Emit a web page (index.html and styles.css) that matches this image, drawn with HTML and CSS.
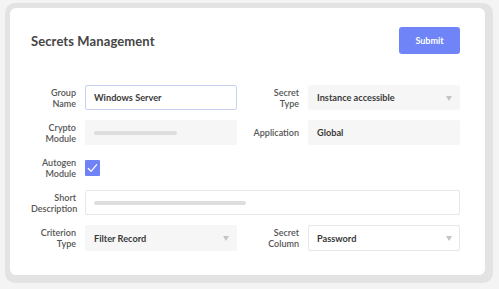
FILE: index.html
```html
<!DOCTYPE html>
<html>
<head>
<meta charset="utf-8">
<link rel="stylesheet" href="styles.css">
</head>
<body>
<div class="frame">
  <div class="card">
    <div class="header">
      <h1 class="title">Secrets Management</h1>
      <button class="submit">Submit</button>
    </div>
    <div class="form">
      <div class="label">Group<br>Name</div>
      <div class="field field-active">Windows Server</div>
      <div class="label">Secret<br>Type</div>
      <div class="field field-filled">Instance accessible<span class="arrow"></span></div>

      <div class="label">Crypto<br>Module</div>
      <div class="field field-filled"><span class="bar bar-short"></span></div>
      <div class="label">Application</div>
      <div class="field field-filled">Global</div>

      <div class="label">Autogen<br>Module</div>
      <div class="check-cell">
        <span class="checkbox">
          <svg viewBox="0 0 16 16" width="15" height="16"><path d="M3.5 8.5 L6.5 11.5 L12.5 4.5" fill="none" stroke="#fff" stroke-width="1.3" stroke-linecap="round" stroke-linejoin="round"/></svg>
        </span>
      </div>
      <div></div>
      <div></div>

      <div class="label">Short<br>Description</div>
      <div class="field field-outline span3"><span class="bar bar-long"></span></div>

      <div class="label">Criterion<br>Type</div>
      <div class="field field-filled tall">Filter Record<span class="arrow"></span></div>
      <div class="label">Secret<br>Column</div>
      <div class="field field-outline tall">Password<span class="arrow"></span></div>
    </div>
  </div>
</div>
</body>
</html>
```
FILE: styles.css
```css
* { box-sizing: border-box; }
html, body { margin: 0; padding: 0; }
body {
  background: #f4f4f4;
  font-family: Lato, "Open Sans", sans-serif;
  width: 499px;
  height: 289px;
  overflow: hidden;
}
.frame {
  margin: 3px 6px 6px 5px;
  padding: 5px 8px 8px 5px;
  background: #e3e3e3;
  border-radius: 10px;
  height: 280px;
}
.card {
  background: #fff;
  border-radius: 6px;
  padding: 19px 25px 23px 21px;
  height: 267px;
}
.header {
  display: flex;
  justify-content: space-between;
  align-items: center;
  height: 27px;
}
.title {
  margin: 0;
  font-size: 13px;
  font-weight: 700;
  color: #454545;
  letter-spacing: 0.1px;
}
.submit {
  width: 61px;
  height: 27px;
  border: none;
  border-radius: 3px;
  background: #6e84f7;
  color: #fff;
  font-family: inherit;
  font-size: 9px;
  font-weight: 700;
  padding: 0;
}
.form {
  margin-top: 31px;
  display: grid;
  grid-template-columns: 45px 152px 53px 152px;
  grid-template-rows: 25px 25px 25px 25px 26px;
  column-gap: 9px;
  row-gap: 10px;
}
.label {
  text-align: right;
  font-size: 9px;
  line-height: 11px;
  color: #555;
  font-weight: 600;
  align-self: center;
  white-space: nowrap;
}
.field {
  position: relative;
  display: flex;
  align-items: center;
  height: 25px;
  padding: 0 8px;
  font-size: 9.2px;
  font-weight: 700;
  color: #3a3a3a;
  border: 1px solid transparent;
  border-radius: 2px;
}
.tall { height: 26px; }
.field-active {
  border-color: #c9d2f3;
  background: #fff;
}
.field-filled {
  background: #f6f6f6;
}
.field-outline {
  border-color: #e6e6e6;
  background: #fff;
}
.span3 { grid-column: span 3; }
.arrow {
  position: absolute;
  right: 7px;
  top: 50%;
  margin-top: -2px;
  width: 0;
  height: 0;
  border-left: 3px solid transparent;
  border-right: 3px solid transparent;
  border-top: 5px solid #c4c4c4;
}
.bar {
  display: block;
  height: 4px;
  border-radius: 2px;
  background: #dedede;
}
.bar-short { width: 83px; }
.bar-long { width: 152px; }
.check-cell {
  display: flex;
  align-items: center;
}
.checkbox {
  display: block;
  width: 15px;
  height: 16px;
  background: #6f82f6;
  border-radius: 1px;
}
.checkbox svg { display: block; }
```
